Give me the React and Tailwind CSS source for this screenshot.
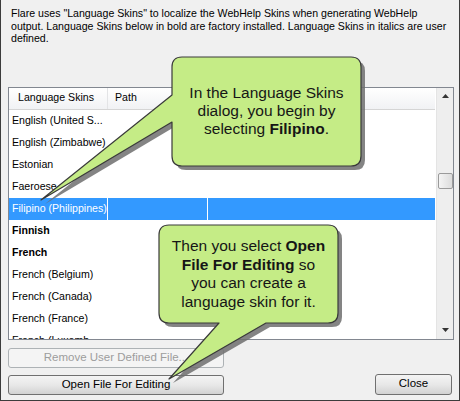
import React from 'react';

const skins = [
  { name: 'English (United S...' },
  { name: 'English (Zimbabwe)' },
  { name: 'Estonian' },
  { name: 'Faeroese' },
  { name: 'Filipino (Philippines)', selected: true },
  { name: 'Finnish', bold: true },
  { name: 'French', bold: true },
  { name: 'French (Belgium)' },
  { name: 'French (Canada)' },
  { name: 'French (France)' },
  { name: 'French (Luxemb...' },
];

const callout1 =
  'M 181 57 H 350 Q 360 57 360 67 V 156 Q 360 166 350 166 H 181 Q 171 166 171 156 V 122 L 40 200 L 171 95 V 67 Q 171 57 181 57 Z';
const callout2 =
  'M 168 225 H 327 Q 337 225 337 235 V 313 Q 337 323 327 323 H 265 L 168 379 L 218 323 H 168 Q 158 323 158 313 V 235 Q 158 225 168 225 Z';

function Callouts() {
  return (
    <>
      <svg className="absolute left-0 top-0 pointer-events-none" width="460" height="401">
        {[callout1, callout2].map((d, i) => (
          <g key={i}>
            <path d={d} transform="translate(4 4)" fill="#6f6f6f" opacity="0.85" />
            <path d={d} fill="#c5ec86" stroke="#3a3a3a" strokeWidth="1.2" strokeLinejoin="round" />
          </g>
        ))}
      </svg>
      <div className="absolute left-[171px] top-[84px] w-[189px] text-center text-[15.5px] leading-[18px] text-[#161616] font-['Liberation_Sans',Arial,sans-serif]">
        In the Language Skins
        <br />
        dialog, you begin by
        <br />
        selecting <b>Filipino</b>.
      </div>
      <div className="absolute left-[158px] top-[237px] w-[179px] text-center text-[15.5px] leading-[18.7px] text-[#161616] font-['Liberation_Sans',Arial,sans-serif]">
        Then you select <b>Open</b>
        <br />
        <b>File For Editing</b> so
        <br />
        you can create a
        <br />
        language skin for it.
      </div>
    </>
  );
}

export default function App() {
  return (
    <div className="relative w-[460px] h-[401px] bg-[#f0f0f0] border-x border-b border-[#3c3c3c] overflow-hidden font-['Liberation_Sans',Arial,sans-serif] text-[11px] text-black flex flex-col">
      <p className="pl-[10px] pt-[7px] leading-[12.5px] text-[10.6px] whitespace-nowrap">
        Flare uses "Language Skins" to localize the WebHelp Skins when generating WebHelp
        <br />
        output. Language Skins below in bold are factory installed. Language Skins in italics are user
        <br />
        defined.
      </p>

      {/* List */}
      <div className="ml-[7px] mt-[42px] w-[446px] h-[253px] border border-[#828790] bg-white flex overflow-hidden text-[10.6px]">
        <div className="flex-1 flex flex-col mr-[1px]">
          <div className="h-[22px] shrink-0 flex bg-gradient-to-b from-white to-[#f1f2f4] border-b border-[#d5d5d5]">
            <div className="w-[99px] border-r border-[#e3e4e6] pl-[9px] flex items-center">Language Skins</div>
            <div className="pl-[7px] flex items-center">Path</div>
          </div>
          {skins.map((s) => (
            <div
              key={s.name}
              className={`h-[22px] shrink-0 flex ${s.selected ? 'bg-[#3399ff] text-white' : ''} ${s.bold ? 'font-bold' : ''}`}
            >
              <div className={`w-[99px] pl-[3px] flex items-center whitespace-nowrap ${s.selected ? 'border-r border-white' : ''}`}>{s.name}</div>
              <div className={`w-[100px] ${s.selected ? 'border-r border-white' : ''}`}></div>
            </div>
          ))}
        </div>
        <div className="w-[17px] shrink-0 bg-[#eeeeee] border-l border-[#e4e4e4] flex flex-col items-center">
          <div className="h-[17px] flex items-center justify-center">
            <svg width="7" height="4"><path d="M0 4 L3.5 0 L7 4 Z" fill="#333" /></svg>
          </div>
          <div className="mt-[68px] w-[15px] h-[16px] rounded-[2px] border border-[#9a9a9a] bg-gradient-to-r from-[#f4f4f4] to-[#dcdcdc]"></div>
          <div className="flex-1"></div>
          <div className="h-[17px] flex items-center justify-center">
            <svg width="7" height="4"><path d="M0 0 L3.5 4 L7 0 Z" fill="#333" /></svg>
          </div>
        </div>
      </div>

      {/* Buttons */}
      <div className="ml-[7px] mt-[8px] w-[216px] h-[20px] border border-[#adb2b5] rounded-[3px] bg-[#f4f4f4] text-[#9d9d9d] flex items-center justify-center text-[11.5px]">
        Remove User Defined File...
      </div>
      <div className="ml-[7px] mr-[7px] mt-[6px] flex justify-between items-start">
        <div className="w-[216px] h-[20px] mt-[1px] border border-[#707070] rounded-[3px] bg-gradient-to-b from-[#f4f4f4] via-[#e8e8e8] to-[#d2d2d2] flex items-center justify-center text-[11.5px]">
          Open File For Editing
        </div>
        <div className="w-[77px] h-[21px] border border-[#707070] rounded-[3px] bg-gradient-to-b from-[#f4f4f4] via-[#e8e8e8] to-[#d2d2d2] flex items-center justify-center text-[11.5px]">
          Close
        </div>
      </div>

      <Callouts />
    </div>
  );
}
